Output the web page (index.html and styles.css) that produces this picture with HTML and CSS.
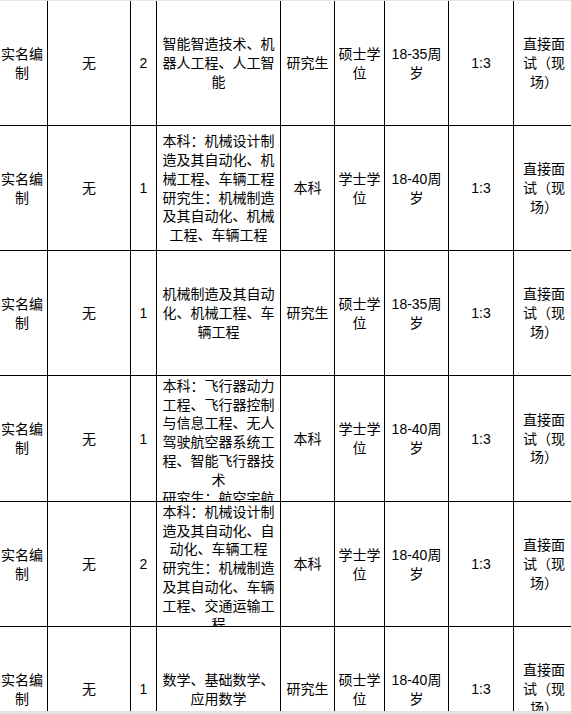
FILE: index.html
```html
<!DOCTYPE html>
<html lang="zh-CN">
<head>
<meta charset="utf-8">
<title>岗位表</title>
<link rel="stylesheet" href="styles.css">
</head>
<body>
<div class="page">
  <div class="top-edge"></div>
  <div class="sheet">
    <div class="grid">
      <div class="row">
        <div class="cell"><div class="t">实名编制</div></div>
        <div class="cell"><div class="t">无</div></div>
        <div class="cell"><div class="t">2</div></div>
        <div class="cell"><div class="t">智能智造技术、机器人工程、人工智能</div></div>
        <div class="cell"><div class="t">研究生</div></div>
        <div class="cell"><div class="t">硕士学位</div></div>
        <div class="cell"><div class="t">18-35周岁</div></div>
        <div class="cell"><div class="t">1:3</div></div>
        <div class="cell"><div class="t">直接面试（现场）</div></div>
      </div>
      <div class="row">
        <div class="cell"><div class="t">实名编制</div></div>
        <div class="cell"><div class="t">无</div></div>
        <div class="cell"><div class="t">1</div></div>
        <div class="cell"><div class="t">本科：机械设计制造及其自动化、机械工程、车辆工程<br>研究生：机械制造及其自动化、机械工程、车辆工程</div></div>
        <div class="cell"><div class="t">本科</div></div>
        <div class="cell"><div class="t">学士学位</div></div>
        <div class="cell"><div class="t">18-40周岁</div></div>
        <div class="cell"><div class="t">1:3</div></div>
        <div class="cell"><div class="t">直接面试（现场）</div></div>
      </div>
      <div class="row">
        <div class="cell"><div class="t">实名编制</div></div>
        <div class="cell"><div class="t">无</div></div>
        <div class="cell"><div class="t">1</div></div>
        <div class="cell"><div class="t">机械制造及其自动化、机械工程、车辆工程</div></div>
        <div class="cell"><div class="t">研究生</div></div>
        <div class="cell"><div class="t">硕士学位</div></div>
        <div class="cell"><div class="t">18-35周岁</div></div>
        <div class="cell"><div class="t">1:3</div></div>
        <div class="cell"><div class="t">直接面试（现场）</div></div>
      </div>
      <div class="row tall">
        <div class="cell"><div class="t">实名编制</div></div>
        <div class="cell"><div class="t">无</div></div>
        <div class="cell"><div class="t">1</div></div>
        <div class="cell"><div class="t">本科：飞行器动力工程、飞行器控制与信息工程、无人驾驶航空器系统工程、智能飞行器技术<br>研究生：航空宇航科学与技术</div></div>
        <div class="cell"><div class="t">本科</div></div>
        <div class="cell"><div class="t">学士学位</div></div>
        <div class="cell"><div class="t">18-40周岁</div></div>
        <div class="cell"><div class="t">1:3</div></div>
        <div class="cell"><div class="t">直接面试（现场）</div></div>
      </div>
      <div class="row">
        <div class="cell"><div class="t">实名编制</div></div>
        <div class="cell"><div class="t">无</div></div>
        <div class="cell"><div class="t">2</div></div>
        <div class="cell"><div class="t">本科：机械设计制造及其自动化、自动化、车辆工程<br>研究生：机械制造及其自动化、车辆工程、交通运输工程</div></div>
        <div class="cell"><div class="t">本科</div></div>
        <div class="cell"><div class="t">学士学位</div></div>
        <div class="cell"><div class="t">18-40周岁</div></div>
        <div class="cell"><div class="t">1:3</div></div>
        <div class="cell"><div class="t">直接面试（现场）</div></div>
      </div>
      <div class="row">
        <div class="cell"><div class="t">实名编制</div></div>
        <div class="cell"><div class="t">无</div></div>
        <div class="cell"><div class="t">1</div></div>
        <div class="cell"><div class="t">数学、基础数学、应用数学</div></div>
        <div class="cell"><div class="t">研究生</div></div>
        <div class="cell"><div class="t">硕士学位</div></div>
        <div class="cell"><div class="t">18-40周岁</div></div>
        <div class="cell"><div class="t">1:3</div></div>
        <div class="cell"><div class="t">直接面试（现场）</div></div>
      </div>
    </div>
  </div>
  <div class="bottom-edge"></div>
</div>
</body>
</html>
```
FILE: styles.css
```css
html, body {
  margin: 0;
  padding: 0;
  background: #ffffff;
}
body {
  font-family: "Liberation Sans", "Noto Sans CJK SC", sans-serif;
  font-size: 14px;
  color: #000000;
  height: 714px;
  overflow: hidden;
}
.page {
  height: 714px;
  display: flex;
  flex-direction: column;
}
.top-edge {
  flex: none;
  height: 1px;
  background: #e6e6e6;
}
.sheet {
  flex: 1;
  min-height: 0;
  overflow: hidden;
}
.grid {
  margin-left: -3px;
  width: 578px;
}
.row {
  display: grid;
  grid-template-columns: 51px 83px 26px 124px 54px 50px 64px 65px 61px;
  height: 125px;
}
.row.tall {
  height: 126px;
}
.cell {
  box-sizing: border-box;
  border-right: 1px solid #000;
  border-bottom: 1px solid #000;
  padding: 1px 3px 0;
  display: flex;
  flex-direction: column;
  overflow: hidden;
  text-align: center;
  line-height: 18.7px;
  min-width: 0;
}
.cell > .t {
  margin: auto 0;
}
.bottom-edge {
  flex: none;
  height: 3px;
  background: #e3e3e3;
}
```
